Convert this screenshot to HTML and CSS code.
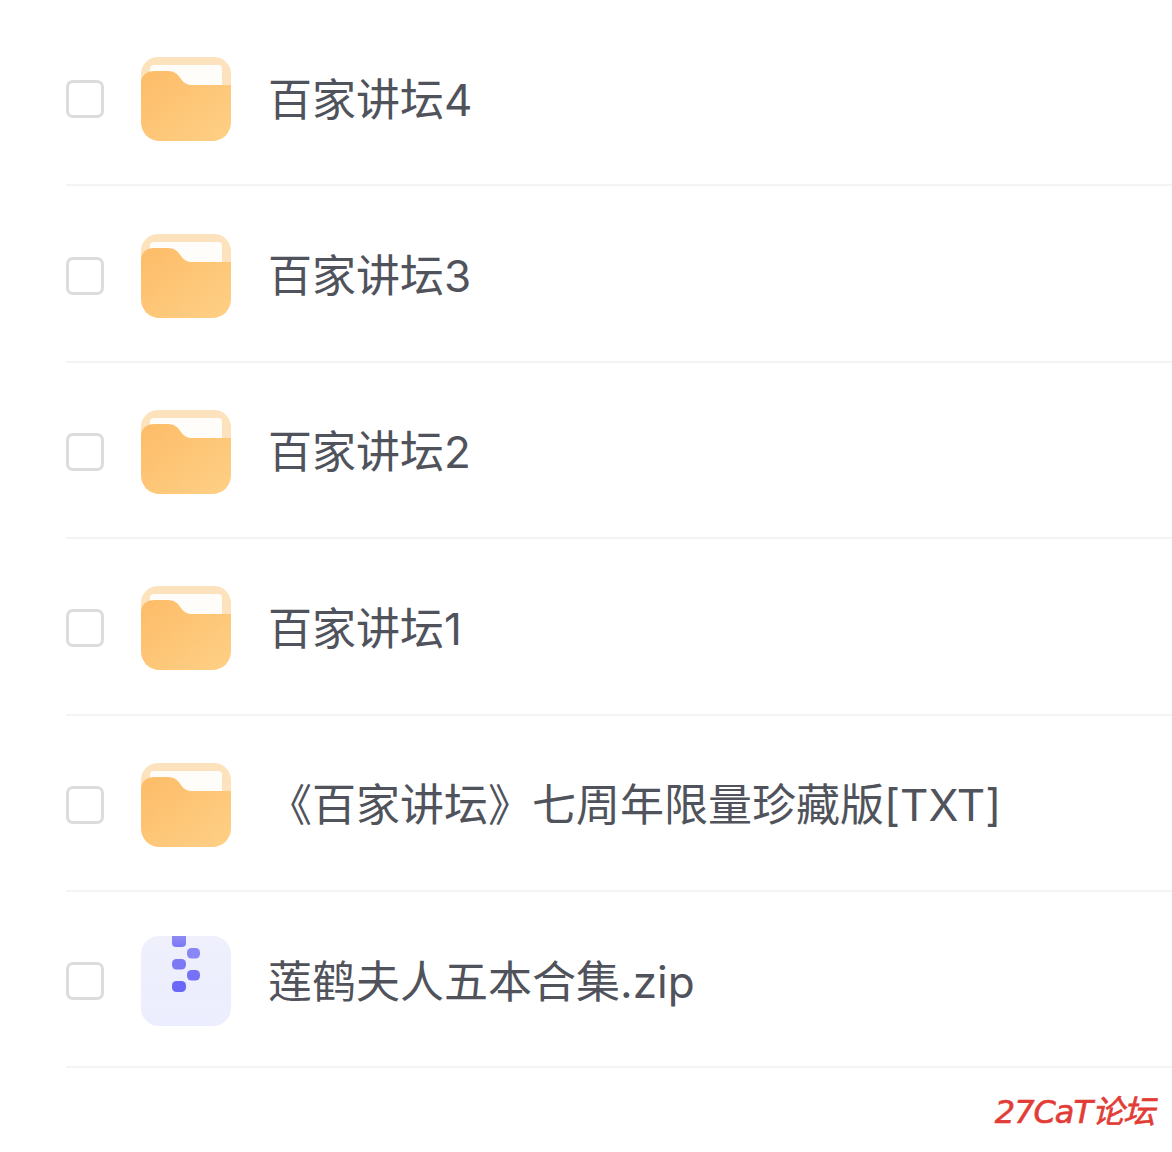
FILE: index.html
```html
<!doctype html>
<html lang="zh-CN">
<head>
<meta name="viewport" content="width=device-width" />
<meta charset="utf-8" />
<title>文件列表</title>
<link rel="stylesheet" href="styles.css">
</head>
<body>
<svg class="defs" width="0" height="0">
	<defs>
		<linearGradient id="folderFill" x1="0" y1="0" x2="1" y2="1">
			<stop offset="0" stop-color="#fdbc68" />
			<stop offset="1" stop-color="#fed086" />
		</linearGradient>
		<linearGradient id="zipBack" x1="0" y1="0" x2="0" y2="1">
			<stop offset="0" stop-color="#eff0fc" />
			<stop offset="1" stop-color="#ecedfe" />
		</linearGradient>
		<linearGradient id="zipTeeth" x1="0" y1="0" x2="0" y2="1">
			<stop offset="0" stop-color="#8f8bf2" />
			<stop offset="1" stop-color="#7b77f5" />
		</linearGradient>
		<symbol id="folder" viewBox="0 0 90 84">
			<rect x="0" y="0" width="90" height="76" rx="17" fill="#fde3bd" />
			<rect x="9" y="8" width="72" height="40" rx="4" fill="#fffdfa" />
			<path d="M0 26 C0 18 6 14 14 14 H27 C33 14 37 17 40 22 C43 26 46 28 52 28 H90 V65 C90 76 82 84 71 84 H19 C8 84 0 76 0 65 Z" fill="url(#folderFill)" />
		</symbol>
		<symbol id="zip" viewBox="0 0 90 90">
			<rect x="0" y="0" width="90" height="90" rx="18" fill="url(#zipBack)" />
			<path d="M31 0 H45 V7 C45 10 43 11 41 11 H35 C33 11 31 10 31 7 Z" fill="url(#zipTeeth)" />
			<rect x="46" y="12" width="13" height="10.5" rx="4.5" fill="#8a86f3" />
			<rect x="31" y="23" width="14" height="10.5" rx="4.5" fill="#7d79f4" />
			<rect x="46" y="34" width="13" height="10.5" rx="4.5" fill="#7672f5" />
			<rect x="31" y="45" width="14" height="11" rx="4.5" fill="#6c68f7" />
		</symbol>
	</defs>
</svg>

<ul class="file-list">
	<li class="file-row">
		<span class="check"></span>
		<svg class="icon"><use href="#folder" /></svg>
		<span class="name">百家讲坛4</span>
	</li>
	<li class="file-row">
		<span class="check"></span>
		<svg class="icon"><use href="#folder" /></svg>
		<span class="name">百家讲坛3</span>
	</li>
	<li class="file-row">
		<span class="check"></span>
		<svg class="icon"><use href="#folder" /></svg>
		<span class="name">百家讲坛2</span>
	</li>
	<li class="file-row">
		<span class="check"></span>
		<svg class="icon"><use href="#folder" /></svg>
		<span class="name">百家讲坛1</span>
	</li>
	<li class="file-row">
		<span class="check"></span>
		<svg class="icon"><use href="#folder" /></svg>
		<span class="name">《百家讲坛》七周年限量珍藏版[TXT]</span>
	</li>
	<li class="file-row">
		<span class="check"></span>
		<svg class="icon icon-zip"><use href="#zip" /></svg>
		<span class="name">莲鹤夫人五本合集.zip</span>
	</li>
</ul>

<div class="watermark">27CaT论坛</div>
</body>
</html>
```

FILE: styles.css
```css
html, body {
	margin: 0;
	padding: 0;
	background-color: #ffffff;
}
body {
	position: relative;
	height: 1152px;
	overflow: hidden;
	font-family: "Inter", "Noto Sans CJK SC", sans-serif;
}
.defs {
	display: block;
	height: 0;
}
.file-list {
	list-style-type: none;
	margin: 0;
	padding: 10px 0 0 66px;
}
.file-row {
	display: flex;
	align-items: center;
	box-sizing: border-box;
	height: 176.4px;
	border-bottom: 2px solid #f4f4f5;
	padding-top: 4px;
}
.check {
	box-sizing: border-box;
	flex: none;
	width: 38px;
	height: 38px;
	border: 3px solid #dcdcde;
	border-radius: 7px;
	margin-right: 37px;
}
.icon {
	flex: none;
	width: 90px;
	height: 84px;
	margin-right: 37px;
}
.icon-zip {
	height: 90px;
}
.name {
	font-size: 44px;
	color: #50535b;
	white-space: nowrap;
	padding-bottom: 5px;
}
.watermark {
	position: absolute;
	right: 18px;
	top: 1086px;
	font-family: "DejaVu Sans", "Noto Sans CJK SC", sans-serif;
	font-size: 32px;
	font-style: italic;
	letter-spacing: -1px;
	color: #e23c36;
	-webkit-text-stroke: 0.6px #e23c36;
}
```
